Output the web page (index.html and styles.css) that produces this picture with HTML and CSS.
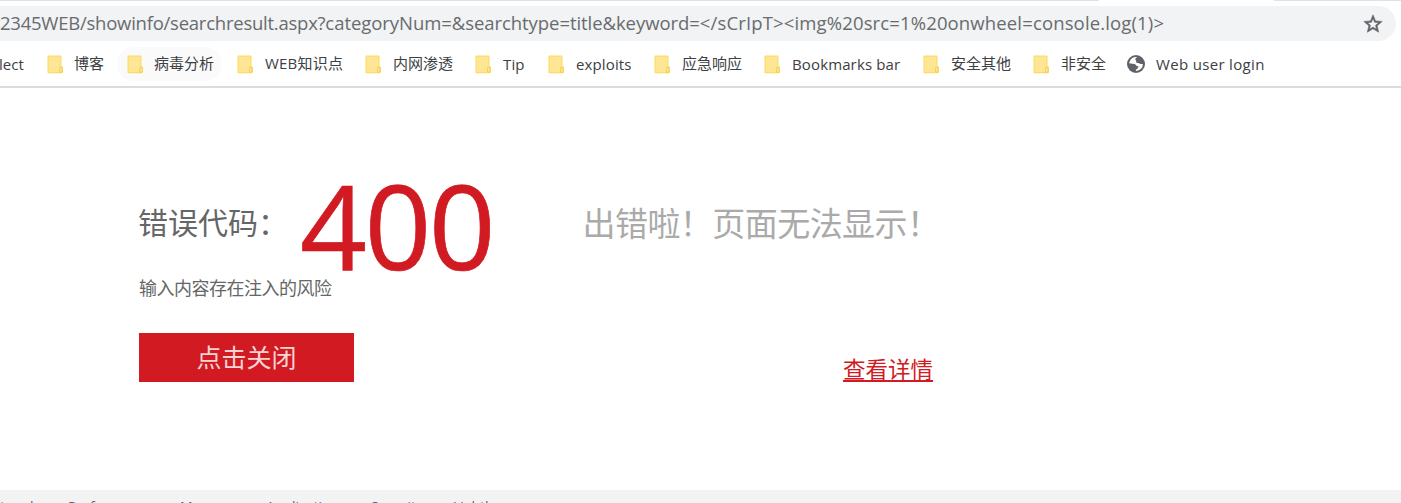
FILE: index.html
```html
<!DOCTYPE html>
<html lang="zh-CN">
<head>
<meta charset="utf-8">
<title>400</title>
<link rel="stylesheet" href="styles.css">
</head>
<body>
<svg width="0" height="0" class="defs">
  <symbol id="folder" viewBox="0 0 17 19">
    <path d="M1.500.5h12A1 1 0 0 1 14.500 1.500V11.500h.5a1 1 0 0 1 1 1v4.500a1.200 1.200 0 0 1-1.200 1.200H1.500a1 1 0 0 1-1-1V1.500a1 1 0 0 1 1-1z" fill="#fbdb62"/>
    <path d="M1.600 1.600h11.800v15.300H1.600z" fill="#ffe694"/>
    <path d="M12.500 12.500h2.500v4.700h-2.500z" fill="#ffe694" stroke="#f0cd50" stroke-width=".8"/>
  </symbol>
</svg>
<header class="browser">
  <div class="tabs"><i></i><i></i></div>
  <div class="omnibox">
    <span class="url"><span class="u1">2345WEB/showinfo/searchresult.aspx?</span><span class="u2">categoryNum=&amp;searchtype=title&amp;keyword=</span><span class="u3">&lt;/sCrIpT&gt;&lt;</span><span class="u4">img%20src=1%20onwheel=console.log(1)&gt;</span></span>
    <svg class="star" viewBox="0 0 24 24"><path d="M22 9.240l-7.190-.62L12 2 9.190 8.630 2 9.240l5.460 4.730L5.820 21 12 17.270 18.180 21l-1.630-7.030L22 9.240zM12 15.400l-3.760 2.270 1-4.280-3.320-2.880 4.380-.38L12 6.100l1.710 4.040 4.380.38-3.320 2.880 1 4.280L12 15.400z" fill="#5f6368" stroke="#5f6368" stroke-width=".6"/></svg>
  </div>
  <nav class="bookmarks">
    <span class="bm first">lect</span>
    <span class="bm w80"><svg><use href="#folder"/></svg><b>博客</b></span>
    <span class="bm w110 hover"><svg><use href="#folder"/></svg><b>病毒分析</b></span>
    <span class="bm w128"><svg><use href="#folder"/></svg><b class="mixed">WEB知识点</b></span>
    <span class="bm w110"><svg><use href="#folder"/></svg><b class="in">内网渗透</b></span>
    <span class="bm w73"><svg><use href="#folder"/></svg><b class="in en">Tip</b></span>
    <span class="bm w106"><svg><use href="#folder"/></svg><b class="in en">exploits</b></span>
    <span class="bm w110"><svg><use href="#folder"/></svg><b class="in">应急响应</b></span>
    <span class="bm w159"><svg><use href="#folder"/></svg><b class="in en">Bookmarks bar</b></span>
    <span class="bm w110"><svg><use href="#folder"/></svg><b class="in">安全其他</b></span>
    <span class="bm w94"><svg><use href="#folder"/></svg><b class="in">非安全</b></span>
    <span class="bm site"><svg class="globe" viewBox="0 0 18 18"><circle cx="9" cy="9" r="9" fill="#5f6368"/><path d="M10.500 2.100C8.600 3 7.600 4.300 8.800 5.300c.9.800 0 1.400.6 2.200.7.900 2 .1 2.900 1 .6.600 1.500.4 3.600.4a7 7 0 0 1-6.700 7.100c-.8-.4-.3-1.500.6-1.700 1-.3.300-1.200 1.400-2 .8-.7.100-1.400-1.100-1.400-1.300 0-1-1.700-2.600-1.900L2.100 8.200a7 7 0 0 1 8.400-6.100z" fill="#fff"/></svg><b class="en login">Web user login</b></span>
  </nav>
</header>
<main class="page">
  <section class="left">
    <div class="code"><span class="label">错误代码：</span><span class="num">400</span></div>
    <p class="reason">输入内容存在注入的风险</p>
    <button class="close">点击关闭</button>
  </section>
  <section class="right">
    <h1>出错啦！页面无法显示！</h1>
    <a class="detail">查看详情</a>
  </section>
</main>
<footer class="devtools"><span class="d1">twork</span><span class="d2">Performance</span><span class="d3">Memory</span><span class="d4">Application</span><span class="d5">Security</span><span class="d6">Lighthouse</span></footer>
</body>
</html>
```
FILE: styles.css
```css
* { box-sizing: border-box; }
body {
  margin: 0;
  width: 1401px;
  height: 503px;
  overflow: hidden;
  display: flex;
  flex-direction: column;
  background: #fff;
  font-family: "Open Sans", "Noto Sans CJK SC", sans-serif;
  white-space: nowrap;
}
.defs { position: absolute; }
.browser { height: 88px; flex: none; border-bottom: 2px solid #dadce0; }
.tabs { height: 6px; display: flex; justify-content: space-between; }
.tabs i { height: 1px; width: 1099px; background: #dee1e6; }
.tabs i + i { width: 127px; }
.omnibox {
  height: 35px;
  width: 1396px;
  background: #f1f3f4;
  border-radius: 0 17.500px 17.500px 0;
  display: flex;
  align-items: center;
  justify-content: space-between;
  padding-right: 12px;
}
.url { font-size: 18.500px; line-height: 34px; height: 35px; color: #696b6e; }
.u1 { letter-spacing: -0.240px; }
.u2 { letter-spacing: -0.060px; }
.u3 { letter-spacing: 0.150px; }
.u4 { letter-spacing: 0.140px; }
.star { width: 22px; height: 22px; }
.bookmarks { height: 45px; display: flex; align-items: center; font-size: 15px; color: #3c4043; padding-top: 1px; }
.bm { height: 34px; display: flex; align-items: center; flex: none; }
.bm svg { width: 17px; height: 19px; margin-right: 10px; flex: none; }
.bm .globe { width: 18px; height: 18px; margin-right: 11px; }
.bm b { font-weight: 400; line-height: 22px; padding-bottom: 2px; }
.bm .en { letter-spacing: 0.130px; padding-bottom: 1px; }
.bm .mixed { letter-spacing: 0.200px; padding-left: 1px; }
.bm .in { padding-left: 1px; }
.bm .login { letter-spacing: 0.330px; }
.first { width: 47px; text-indent: -1px; }
.w73 { width: 73px; }
.w80 { width: 80px; }
.w94 { width: 94px; }
.w106 { width: 106px; }
.w110 { width: 110px; }
.w128 { width: 128px; }
.w159 { width: 159px; }
.hover { background: #fafafa; border-radius: 17px; width: 105px; margin: 0 15px 0 -10px; padding-left: 10px; }
.page { height: 402px; flex: none; display: flex; padding-left: 139px; }
.left { width: 444px; padding-top: 66px; }
.code { height: 120px; display: flex; }
.label { width: 162px; font-size: 30px; line-height: 44px; padding-top: 47px; color: #666; text-indent: -1px; }
.num { font-size: 117px; line-height: 142px; letter-spacing: -2.500px; text-indent: -1px; color: #d11a21; -webkit-text-stroke: 0.700px #d11a21; }
.reason { margin: 0; height: 59px; font-size: 18px; letter-spacing: -0.500px; line-height: 27px; color: #666; font-family: "Noto Sans CJK SC", sans-serif; }
.close {
  display: block;
  width: 215px;
  height: 49px;
  padding: 0 0 2px;
  border: 0;
  background: #d11a21;
  color: #fad4d4;
  font: 25px/47px "Noto Sans CJK SC", sans-serif;
}
.right { width: 350px; padding-top: 112px; display: flex; flex-direction: column; }
h1 { margin: 0; font-size: 33px; letter-spacing: -0.550px; line-height: 48px; font-weight: 400; color: #aaa; text-indent: -0.500px; }
.detail { align-self: flex-end; margin-top: 105px; font-size: 22.500px; line-height: 34px; color: #d11a21; text-decoration: underline; text-decoration-thickness: 2px; text-underline-offset: 2px; }
.devtools { flex: none; height: 13px; background: #f3f3f3; display: flex; overflow: hidden; font-size: 14px; line-height: 20px; padding-top: 7px; color: #5f6368; }
.devtools span { flex: none; }
.d1 { width: 68px; }
.d2 { width: 112px; }
.d3 { width: 86px; }
.d4 { width: 105px; }
.d5 { width: 82px; }
```
